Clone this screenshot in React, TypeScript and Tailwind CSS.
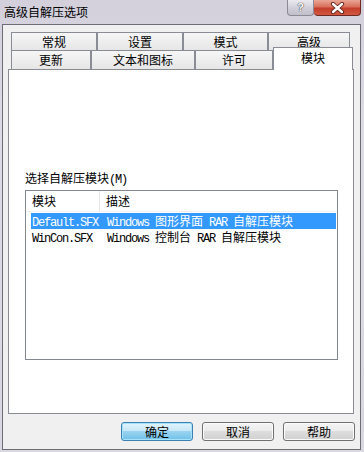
import React from "react"

const CJK = /([\u3000-\u9fff\uff00-\uffef]+)/

// SimSun-like mix: CJK glyphs 12px wide, ASCII 6px wide
const Mixed = ({ text }: { text: string }) => (
  <>
    {text
      .split(CJK)
      .filter(Boolean)
      .map((part, i) =>
        CJK.test(part) ? (
          <span key={i} className="font-['Noto_Sans_CJK_SC',sans-serif] text-[12px]">
            {part}
          </span>
        ) : (
          <span key={i} className="font-['Liberation_Mono',monospace] text-[12px] tracking-[-1.2px]">
            {part}
          </span>
        )
      )}
  </>
)

const cjk = "font-['Noto_Sans_CJK_SC',sans-serif] text-[12px] leading-[14px] text-black"

const backTabs = [
  { label: "常规", w: "w-[86px]" },
  { label: "设置", w: "w-[86px]" },
  { label: "模式", w: "w-[85px]" },
  { label: "高级", w: "w-[82px]" },
]

const frontTabs = [
  { label: "更新", w: "w-[80px]" },
  { label: "文本和图标", w: "w-[104px]" },
  { label: "许可", w: "w-[78px]" },
]

const modules = [
  { name: "Default.SFX", desc: "Windows 图形界面 RAR 自解压模块", selected: true },
  { name: "WinCon.SFX", desc: "Windows 控制台 RAR 自解压模块", selected: false },
]

const TitleBar = () => (
  <div className="flex h-[24px] items-start justify-between">
    <span className={`${cjk} mt-[5px] ml-[4px]`}>高级自解压选项</span>
    <div className="mr-[3px] flex">
      <div className="flex h-[16px] w-[27px] items-center justify-center rounded-b-[4px] border border-t-0 border-[#8b8a96] bg-[linear-gradient(180deg,#eceaf0,#d2d0da_50%,#c0bfca)]">
        <span className="font-['Liberation_Sans',sans-serif] text-[11px] font-bold leading-none text-white [text-shadow:0_0_1px_#333,0_0_1px_#333]">
          ?
        </span>
      </div>
      <div className="flex h-[16px] w-[47px] items-center justify-center rounded-b-[4px] border border-t-0 border-l-0 border-[#6e2a22] bg-[linear-gradient(180deg,#eaa696,#d8705c_45%,#c33f2b_55%,#d35741)]">
        <svg width="15" height="12" viewBox="0 0 15 12">
          <path d="M3 2 L12 10 M12 2 L3 10" stroke="#5a2018" strokeWidth="4.2" strokeLinecap="round" />
          <path d="M3 2 L12 10 M12 2 L3 10" stroke="#ffffff" strokeWidth="2.4" strokeLinecap="round" />
        </svg>
      </div>
    </div>
  </div>
)

const ModuleList = () => (
  <div className="h-[170px] w-[313px] border border-[#828790] bg-white">
    <div className="flex h-[21px] items-center border-b border-[#f0f0f0]">
      <div className={`${cjk} flex h-full w-[74px] items-center border-r border-[#e5e5e5] pl-[6px]`}>模块</div>
      <div className={`${cjk} pl-[6px]`}>描述</div>
    </div>
    <div className="mt-[1px] flex flex-col">
      {modules.map((m) => (
        <div
          key={m.name}
          className={`ml-[5px] mr-[1px] flex h-[16px] items-center whitespace-pre leading-[16px] ${
            m.selected ? "bg-[#3399ff] text-white" : "text-black"
          }`}
        >
          <div className="w-[76px] pl-[1px]">
            <Mixed text={m.name} />
          </div>
          <div>
            <Mixed text={m.desc} />
          </div>
        </div>
      ))}
    </div>
  </div>
)

const DialogButton = ({ label, isDefault }: { label: string; isDefault?: boolean }) => (
  <button
    type="button"
    className={`${cjk} flex h-[19px] w-[72px] items-center justify-center rounded-[3px] border ${
      isDefault
        ? "border-[#3c7fb1] bg-[linear-gradient(180deg,#e3f4fc,#c4e5f6_50%,#9ad3f0_50%,#6fc0e8)] shadow-[inset_0_0_0_1px_#a6e3fb]"
        : "border-[#707070] bg-[linear-gradient(180deg,#f4f4f4,#ebebeb_50%,#dddddd_50%,#d0d0d0)] shadow-[inset_0_0_0_1px_#fbfbfb]"
    }`}
  >
    {label}
  </button>
)

export default function App() {
  return (
    <div className="flex h-[452px] w-[364px] flex-col bg-[linear-gradient(180deg,#d3d0dc,#dddce4_30%,#d9d8e0)]">
      <TitleBar />
      <div className="ml-[2px] flex h-[426px] w-[359px] flex-col border border-[#6d6c78] bg-[#f0f0f0]">
        <div className="ml-[5px] mt-[7px] flex w-[346px] flex-col">
          <div className="flex h-[18px] pl-[3px]">
            {backTabs.map((t) => (
              <div
                key={t.label}
                className={`${t.w} ${cjk} flex items-center justify-center border border-b-0 border-[#898c95] bg-[linear-gradient(180deg,#f6f6f6,#e6e6e6)] pt-[1px]`}
              >
                {t.label}
              </div>
            ))}
          </div>
          <div className="flex h-[19px] items-end pl-[3px]">
            {frontTabs.map((t) => (
              <div
                key={t.label}
                className={`${t.w} ${cjk} flex h-[19px] items-center justify-center border border-b-0 border-[#898c95] bg-[linear-gradient(180deg,#f6f6f6,#e6e6e6)]`}
              >
                {t.label}
              </div>
            ))}
            <div className={`${cjk} relative z-10 -mb-[1px] flex h-[23px] w-[80px] items-start justify-center border border-b-0 border-[#898c95] bg-white pt-[3px]`}>
              模块
            </div>
          </div>
          <div className="flex h-[345px] flex-col border border-[#898c95] bg-white pl-[16px] pt-[99px]">
            <div className="whitespace-pre leading-[16px] text-black">
              <Mixed text="选择自解压模块(M)" />
            </div>
            <div className="mt-[2px]">
              <ModuleList />
            </div>
          </div>
        </div>
        <div className="mr-[5px] mt-[8px] flex justify-end gap-[9px]">
          <DialogButton label="确定" isDefault />
          <DialogButton label="取消" />
          <DialogButton label="帮助" />
        </div>
      </div>
    </div>
  )
}
